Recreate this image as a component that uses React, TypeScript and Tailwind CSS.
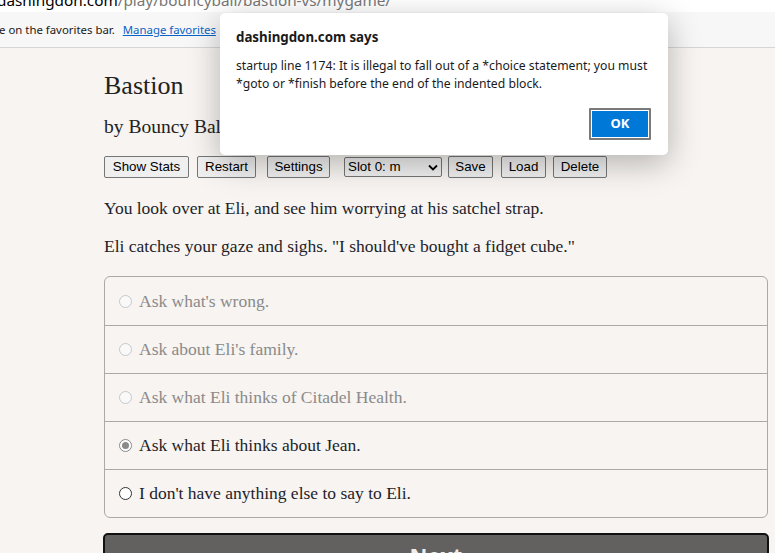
import React from "react";

const serif = { fontFamily: '"Liberation Serif", serif' };
const ui = { fontFamily: '"Noto Sans", "Liberation Sans", sans-serif' };
const arial = { fontFamily: '"Liberation Sans", Arial, sans-serif' };

function Radio({ state }: { state: "disabled" | "checked" | "enabled" }) {
  if (state === "checked") {
    return (
      <span className="inline-flex h-[13px] w-[13px] items-center justify-center rounded-full border border-[#8a8a8a] bg-white">
        <span className="h-[7px] w-[7px] rounded-full bg-[#8a8a8a]" />
      </span>
    );
  }
  if (state === "enabled") {
    return <span className="inline-block h-[13px] w-[13px] rounded-full border border-[#333] bg-white" />;
  }
  return <span className="inline-block h-[13px] w-[13px] rounded-full border border-[#c8c8c8] bg-[#f9f9f9]" />;
}

const choices: { text: string; state: "disabled" | "checked" | "enabled" }[] = [
  { text: "Ask what's wrong.", state: "disabled" },
  { text: "Ask about Eli's family.", state: "disabled" },
  { text: "Ask what Eli thinks of Citadel Health.", state: "disabled" },
  { text: "Ask what Eli thinks about Jean.", state: "checked" },
  { text: "I don't have anything else to say to Eli.", state: "enabled" },
];

function Btn({ children, className = "" }: { children: React.ReactNode; className?: string }) {
  return (
    <span
      style={arial}
      className={`inline-flex h-[22px] items-center justify-center rounded-[2px] border border-[#767676] bg-[#efefef] text-[13.33px] text-black ${className}`}
    >
      {children}
    </span>
  );
}

export default function App() {
  return (
    <div className="relative h-[553px] w-[775px] overflow-hidden bg-[#f7f4f1]">
      {/* address strip */}
      <div className="h-[12px] overflow-hidden bg-white">
        <div style={ui} className="-mt-[10px] -ml-[3px] whitespace-nowrap text-[15.3px] leading-[20px]">
          <span className="text-black">dashingdon.com</span>
          <span className="text-[#767676]">/play/bouncyball/bastion-vs/mygame/</span>
        </div>
      </div>
      {/* favorites bar */}
      <div className="flex h-[36px] items-center border-b border-[#d6d6d6] bg-[#f7f7f7]">
        <span style={ui} className="-ml-[1px] whitespace-nowrap text-[11.4px] text-[#1a1a1a]">
          e on the favorites bar.
        </span>
        <span style={ui} className="ml-[8px] whitespace-nowrap text-[11.4px] text-[#0b63c5] underline">
          Manage favorites
        </span>
      </div>

      {/* page content */}
      <div className="ml-[104px] w-[664px]" style={serif}>
        <div className="mt-[23px] text-[26px] leading-[30px] text-[#222]">Bastion</div>
        <div className="mt-[15px] text-[19.5px] leading-[22px] text-[#222]">by Bouncy Ball</div>
        <div className="mt-[18px] flex items-center">
          <Btn className="w-[85px]">Show Stats</Btn>
          <Btn className="ml-[8px] w-[59px]">Restart</Btn>
          <Btn className="ml-[11px] w-[63px] bg-[#dedede]">Settings</Btn>
          <span
            style={arial}
            className="ml-[14px] inline-flex h-[20px] w-[98px] items-center justify-between rounded-[2px] border border-[#767676] bg-[#efefef] pl-[3px] pr-[3px] text-[13.33px] text-black"
          >
            Slot 0: m
            <svg width="10" height="7" viewBox="0 0 10 7">
              <path d="M1 1.5 L5 5.5 L9 1.5" stroke="#000" strokeWidth="1.8" fill="none" />
            </svg>
          </span>
          <Btn className="ml-[6px] w-[45px]">Save</Btn>
          <Btn className="ml-[8px] w-[45px]">Load</Btn>
          <Btn className="ml-[7px] w-[54px]">Delete</Btn>
        </div>
        <p className="mt-[19px] text-[17.5px] leading-[22px] text-[#1e1e2a]">
          You look over at Eli, and see him worrying at his satchel strap.
        </p>
        <p className="mt-[16px] text-[17.5px] leading-[22px] text-[#1e1e2a]">
          Eli catches your gaze and sighs. "I should've bought a fidget cube."
        </p>
        <div className="mt-[19px] overflow-hidden rounded-[6px] border border-[#aaa]">
          {choices.map((c, i) => (
            <div
              key={i}
              className={`flex h-[48px] items-center pl-[14px] ${i > 0 ? "border-t border-[#aaa]" : ""}`}
            >
              <Radio state={c.state} />
              <span
                className={`ml-[7px] text-[17.5px] ${c.state === "disabled" ? "text-[#8a8a8a]" : "text-[#1e1e2a]"}`}
              >
                {c.text}
              </span>
            </div>
          ))}
        </div>
        <div className="mt-[15px] -ml-[1px] flex h-[40px] w-[666px] justify-center rounded-t-[5px] border-2 border-[#111] bg-[#636160] pt-[4px]">
          <span style={ui} className="text-[22px] font-bold text-[#eee]">Next</span>
        </div>
      </div>

      {/* dialog */}
      <div
        style={ui}
        className="absolute left-[220px] top-[13px] h-[142px] w-[448px] rounded-[5px] bg-white shadow-[0_8px_32px_rgba(0,0,0,0.28)]"
      >
        <div className="ml-[16px] mt-[14px] text-[13.3px] font-bold leading-[20px] text-[#1a1a1a]">dashingdon.com says</div>
        <div className="ml-[16px] mt-[10px] text-[12.2px] leading-[18px] text-[#1a1a1a]">
          startup line 1174: It is illegal to fall out of a *choice statement; you must
          <br />
          *goto or *finish before the end of the indented block.
        </div>
        <div className="absolute left-[369px] top-[95px] h-[32px] w-[62px] rounded-[1px] border-2 border-[#7a7a7a] p-[1px]">
          <div className="flex h-full w-full items-center justify-center bg-[#0078d7] text-[13px] font-bold text-white">
            OK
          </div>
        </div>
      </div>
    </div>
  );
}
